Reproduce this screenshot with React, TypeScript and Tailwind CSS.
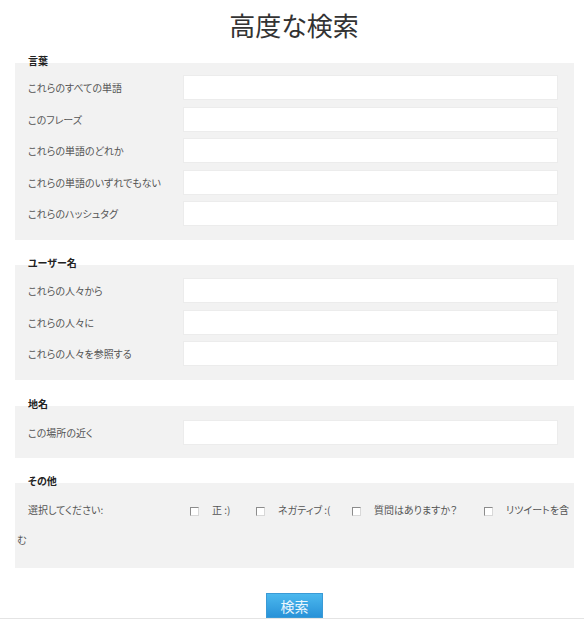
import React from 'react';

const font = {
  fontFamily: '"Noto Sans CJK JP", "Noto Sans", sans-serif',
};

const wordRows = [
  'これらのすべての単語',
  'このフレーズ',
  'これらの単語のどれか',
  'これらの単語のいずれでもない',
  'これらのハッシュタグ',
];

const userRows = ['これらの人々から', 'これらの人々に', 'これらの人々を参照する'];

const SectionTitle = ({ children }: { children: React.ReactNode }) => (
  <div className="h-[12px] leading-[12px] -mb-[4px] pl-[28px] text-[10px] font-bold text-[#222]">
    {children}
  </div>
);

const FieldRow = ({ label }: { label: string }) => (
  <div className="flex items-center h-[25px]">
    <label className="w-[155px] text-[10px] text-[#555]">{label}</label>
    <input
      type="text"
      className="w-[375px] h-[25px] bg-white border border-[#ececec] outline-none"
    />
  </div>
);

const Check = () => (
  <span className="inline-block w-[9px] h-[9px] align-middle mr-[13px] bg-white border-t border-l border-[#8c8c8c] border-r-[#d8d8d8] border-b-[#d8d8d8] border-r border-b" />
);

export default function App() {
  return (
    <div className="w-[584px] bg-white [font-feature-settings:'palt']" style={font}>
      {/* Header */}
      <div className="h-[55px] flex items-center justify-center pb-[6px] pl-[4px]">
        <h1 className="text-[26px] leading-none text-[#333]">高度な検索</h1>
      </div>

      {/* Words */}
      <SectionTitle>言葉</SectionTitle>
      <div className="ml-[15px] w-[559px] bg-[#f2f2f2] pl-[13px] pt-[12px] pb-[14px] flex flex-col gap-[6.5px]">
        {wordRows.map((r) => (
          <FieldRow key={r} label={r} />
        ))}
      </div>

      {/* Users */}
      <div className="mt-[17px]">
        <SectionTitle>ユーザー名</SectionTitle>
      </div>
      <div className="ml-[15px] w-[559px] bg-[#f2f2f2] pl-[13px] pt-[13px] pb-[14px] flex flex-col gap-[6.5px]">
        {userRows.map((r) => (
          <FieldRow key={r} label={r} />
        ))}
      </div>

      {/* Place */}
      <div className="mt-[18px]">
        <SectionTitle>地名</SectionTitle>
      </div>
      <div className="ml-[15px] w-[559px] bg-[#f2f2f2] pl-[13px] pt-[14px] pb-[13px]">
        <FieldRow label="この場所の近く" />
      </div>

      {/* Other */}
      <div className="mt-[17px]">
        <SectionTitle>その他</SectionTitle>
      </div>
      <div className="ml-[15px] w-[559px] bg-[#f2f2f2] pl-[2px] pt-[12px] pb-[13px] text-[10px] leading-[30px] text-[#555]">
        <span className="inline-block ml-[11px] w-[162px]">選択してください:</span>
        <span className="inline-block w-[66px]">
          <Check />正 :)
        </span>
        <span className="inline-block w-[96px]">
          <Check />ネガティブ :(
        </span>
        <span className="inline-block w-[132px]">
          <Check />質問はありますか？
        </span>
        <span className="whitespace-nowrap">
          <Check />リツイートを含
        </span>
        <br />む
      </div>

      {/* Submit */}
      <div className="mt-[25px] flex justify-center pl-[5px]">
        <button className="w-[57px] h-[25px] text-[14px] leading-none text-[#eaf6fd] border border-[#3a9ad6] bg-gradient-to-b from-[#4bb8ee] to-[#2892d8]">
          検索
        </button>
      </div>
      <div className="h-px bg-[#e4e4e4]" />
    </div>
  );
}
